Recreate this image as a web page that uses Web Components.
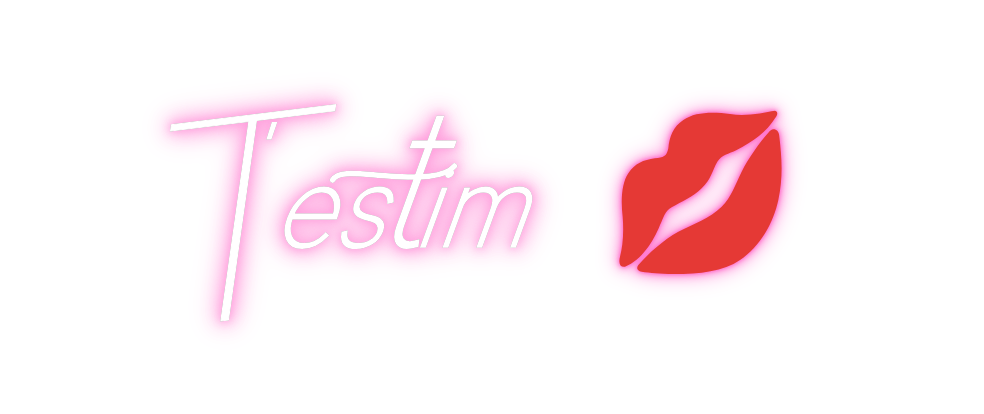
<!doctype html>
<html>
<head>
<meta charset="utf-8">
<style>
html,body{margin:0;background:#fff;}
</style>
</head>
<body>
<neon-sign>
  <neon-word slot="word"></neon-word>
  <neon-lips slot="icon"></neon-lips>
</neon-sign>
<script>
class NeonSign extends HTMLElement {
    constructor(){
        super();
        this.attachShadow({mode:'open'});
        this.shadowRoot.innerHTML = `
        <style>
        :host{
            display:flex;
            width:984px;
            height:414px;
            box-sizing:border-box;
            padding:90px 0 0 160px;
            overflow:hidden;
            background:#fff;
        }
        .row{display:flex;align-items:flex-start;gap:52px;}
        </style>
        <div class="row">
            <slot name="word"></slot>
            <slot name="icon"></slot>
        </div>`;
    }
}

class NeonWord extends HTMLElement {
    constructor(){
        super();
        this.attachShadow({mode:'open'});
        this.shadowRoot.innerHTML = `
        <style>
        :host{
            display:flex;
            align-items:flex-start;
            width:388px;
            height:240px;
            font-family:Inter,"Liberation Sans",sans-serif;
            font-weight:100;
            color:#fff;
            -webkit-text-stroke:3.6px #fff;
            filter:drop-shadow(0 0 .5px #999) drop-shadow(0 0 4px #ff9ddc) drop-shadow(0 0 9px #ff9ddc) drop-shadow(0 0 12px #ffc4ea);
        }
        span{display:block;line-height:1;white-space:pre;}
        .cap{
            font-size:276px;
            width:176px;
            margin-top:-10px;
            -webkit-text-stroke:1px #fff;
            transform:translateX(-6px) rotate(-7deg) skewX(-15deg) scaleX(1.22);
        }
        .mark{font-size:62px;margin:26px 0 0 -72px;transform:skewX(-18deg);-webkit-text-stroke:4px #fff;}
        .rest{
            display:flex;
            align-items:baseline;
            margin:-8px 0 0 22px;
            transform:skewX(-20deg);
        }
        .rest span{font-size:104px;}
        .rest .tall{font-size:190px;margin:0 -8px;position:relative;}
        .bar{
            position:absolute;
            left:-70px;
            top:84px;
            width:140px;
            height:30px;
            overflow:visible;
            transform:skewX(20deg);
        }
        .bar path{fill:none;stroke:#fff;stroke-width:5.5;stroke-linecap:round;}
        </style>
        <span class="cap">T</span><span class="mark">'</span><div class="rest"><span>es</span><span class="tall">t<svg class="bar" viewBox="0 0 140 30"><path d="M4 14C10 4 30 8 60 10C90 12 116 12 126 0"/></svg></span><span>i</span><span>m</span></div>`;
    }
}

class NeonLips extends HTMLElement {
    constructor(){
        super();
        this.attachShadow({mode:'open'});
        this.shadowRoot.innerHTML = `
        <style>
        :host{display:block;width:200px;height:200px;}
        svg{
            display:block;
            overflow:visible;
            filter:drop-shadow(0 0 2px #ff5cc2) drop-shadow(0 0 5px #ff7fd2) drop-shadow(0 0 10px #ffb0e4);
        }
        </style>
        <svg width="200" height="200" viewBox="0 0 600 600" fill="#e53935">
            <path d="M525 62C535 65 533 75 525 85C500 125 460 155 410 180C385 192 365 195 352 215C335 245 335 265 305 295C280 320 245 335 215 352C195 362 190 385 180 405C160 455 125 510 75 530C60 532 55 520 60 500C68 470 72 430 68 380C62 330 65 280 85 250C105 220 130 210 165 205C190 203 200 200 205 175C208 140 220 110 250 90C285 65 340 65 390 72C440 80 490 68 525 62Z"/>
            <path d="M520 118C530 118 537 125 538 140C545 200 550 260 535 330C520 400 480 470 420 510C370 545 300 552 220 552C180 552 150 548 125 545C112 543 108 535 115 525C145 490 190 450 235 425C280 402 330 385 365 350C395 320 405 285 425 245C445 205 480 155 505 128C510 122 515 118 520 118Z"/>
        </svg>`;
    }
}

customElements.define('neon-sign', NeonSign);
customElements.define('neon-word', NeonWord);
customElements.define('neon-lips', NeonLips);
</script>
</body>
</html>
